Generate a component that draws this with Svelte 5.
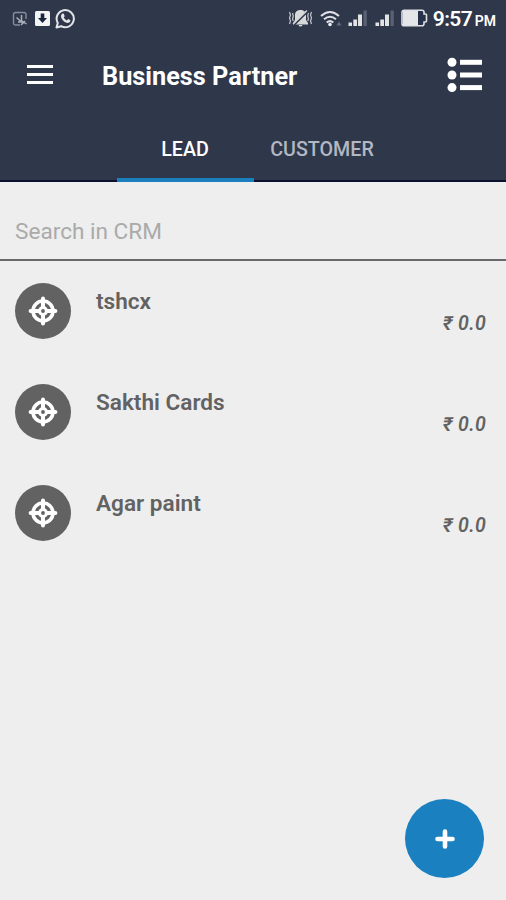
<script>
    let activeTab = "LEAD";
    const tabs = ["LEAD", "CUSTOMER"];

    let partners = [
        { name: "tshcx", amount: "0.0" },
        { name: "Sakthi Cards", amount: "0.0" },
        { name: "Agar paint", amount: "0.0" },
    ];
</script>

<div class="screen">
    <header>
        <div class="status">
            <div class="notifications">
                <svg class="shot" width="16" height="16" viewBox="0 0 16 16">
                    <path d="M8 14H3.500A2 2 0 0 1 1.500 12V3.500A2 2 0 0 1 3.500 1.500H12A2 2 0 0 1 14 3.500V8" fill="none" stroke="#858d9d" stroke-width="1.400" />
                    <path d="M4.500 6.500l5 4.500M9.500 4v7M6 11h5M13 10l-4 4M10 10l4.500 3" fill="none" stroke="#aab0bb" stroke-width="1.500" />
                </svg>
                <svg class="download" width="15" height="15" viewBox="0 0 15 15">
                    <rect width="15" height="15" rx="1.500" fill="#f3f4f6" />
                    <path d="M5.700 2.500h3.600v4.500h2.700l-4.500 5-4.500-5h2.700z" fill="#18233c" />
                </svg>
                <svg width="21" height="21" viewBox="0 0 21 21">
                    <path d="M1.500 19.500l1.300-4.600A8.600 8.600 0 1 1 6.200 18.200z" fill="none" stroke="#e3e5e9" stroke-width="2" stroke-linejoin="round" />
                    <path d="M7.300 5.500l1.500.3.900 2.400-1 1.300q1.200 2.100 3.100 2.900l1.300-1.300 2.400 1.200q-.2 2.600-2.800 2.700-4.100-.4-6.600-5.500-.7-2.600 1.200-4z" fill="#e3e5e9" />
                </svg>
            </div>
            <div class="system">
                <svg class="vibrate" width="25" height="18" viewBox="0 0 25 18">
                    <path d="M12.500 1c-4 0-5.500 2.500-5.500 5v5L5 14v1.500h15V14l-2-3V6c0-2.500-1.500-5-5.500-5zM10.500 16h4q-.5 1.500-2 1.500t-2-1.500z" fill="#d7d9d8" />
                    <path d="M5.300 16.500L20.500 1.500" stroke="#2f374b" stroke-width="2.200" />
                    <path d="M5 15.300L19 1.500" stroke="#d7d9d8" stroke-width="1.300" />
                    <path d="M1.500 3l1 3-1 3 1 3-1 3M4.500 4l.8 3-.8 3 .8 2M23.500 3l-1 3 1 3-1 3 1 3M20.500 4l-.8 3 .8 3-.8 2" fill="none" stroke="#c5c8ce" stroke-width="1.200" />
                </svg>
                <svg class="wifi" width="24" height="17" viewBox="0 0 24 17">
                    <path d="M1 6q9-8 18 0M4 9.300q6-5 12 0M6.700 12.500q3.300-2.800 6.600 0" fill="none" stroke="#dfe1e4" stroke-width="2" />
                    <circle cx="10" cy="14.500" r="1.800" fill="#eee" />
                    <path d="M16.500 15.500l2.500-4 2.500 4z" fill="#626a7b" />
                </svg>
                {#each [0, 1] as sim}
                    <svg class="signal" width="20" height="18" viewBox="0 0 20 18">
                        <path d="M.5 13.500H4V17H.5zM5.300 10.500H9V17H5.300zM10 5.500h4V17h-4z" fill="#e1e3e5" />
                        <path d="M15.500 1.500h3.300V17h-3.300z" fill="#596173" />
                    </svg>
                {/each}
                <svg class="battery" width="27" height="18" viewBox="0 0 27 18">
                    <path d="M3 1.200h18a2 2 0 0 1 2 2V5h1.500a1 1 0 0 1 1 1v6a1 1 0 0 1-1 1H23v1.800a2 2 0 0 1-2 2H3a2 2 0 0 1-2-2V3.200a2 2 0 0 1 2-2z" fill="#273149" stroke="#dfe1e4" stroke-width="1.600" />
                    <path d="M2 2h15v14H2z" fill="#e5e6e7" />
                </svg>
                <span class="time">9:57</span><span class="period">PM</span>
            </div>
        </div>

        <div class="toolbar">
            <button class="menu" aria-label="Menu">
                <span></span>
                <span></span>
                <span></span>
            </button>
            <h1>Business Partner</h1>
            <button class="list-button" aria-label="List">
                <svg width="36" height="36" viewBox="0 0 36 36">
                    <g fill="#fff">
                        <circle cx="5" cy="5.300" r="4.500" />
                        <circle cx="5" cy="18" r="4.500" />
                        <circle cx="5" cy="30.600" r="4.500" />
                        <rect x="13" y="2.800" width="22" height="5" />
                        <rect x="13" y="15.500" width="22" height="5" />
                        <rect x="13" y="28.100" width="22" height="5" />
                    </g>
                </svg>
            </button>
        </div>

        <nav>
            {#each tabs as tab}
                <button class="tab" class:active={activeTab === tab} on:click={() => (activeTab = tab)}>
                    <span>{tab}</span>
                </button>
            {/each}
        </nav>
    </header>

    <input type="text" placeholder="Search in CRM" />

    <ul>
        {#each partners as partner}
            <li>
                <div class="avatar">
                    <svg width="30" height="30" viewBox="0 0 30 30">
                        <circle cx="15" cy="15" r="10" fill="none" stroke="#fff" stroke-width="3.600" />
                        <circle cx="15" cy="15" r="3.500" fill="none" stroke="#fff" stroke-width="3.200" />
                        <path d="M15 2.600v8.400M15 19v8.400M2.600 15h8.400M19 15h8.400" stroke="#fff" stroke-width="4" stroke-linecap="round" />
                    </svg>
                </div>
                <strong>{partner.name}</strong>
                <em>₹ {partner.amount}</em>
            </li>
        {/each}
    </ul>

    <button class="add" aria-label="Add">
        <svg width="20" height="20" viewBox="0 0 20 20">
            <path d="M10 2.500v15M2.500 10h15" stroke="#fff" stroke-width="4.600" stroke-linecap="round" />
        </svg>
    </button>
</div>

<style>
    :global(body) {
        margin: 0;
        background: #eee;
    }

    .screen {
        position: relative;
        width: 506px;
        height: 900px;
        overflow: hidden;
        background: #eee;
        color: #626262;
        font-family: Roboto, sans-serif;
    }

    button {
        padding: 0;
        border: 0;
        background: none;
        color: inherit;
        font: inherit;
    }

    svg {
        display: block;
        flex: none;
    }

    header {
        box-sizing: border-box;
        height: 182px;
        background: #2f374b;
        border-bottom: 2px solid #0c1130;
        color: #fff;
    }

    .status {
        display: flex;
        justify-content: space-between;
        height: 37px;
        padding: 0 10px 0 12px;
    }

    .notifications,
    .system {
        display: flex;
        align-items: center;
        height: 36px;
    }

    .shot {
        margin-right: 7px;
        margin-top: 1px;
    }

    .download {
        margin-right: 5px;
    }

    .vibrate {
        margin-right: 7px;
    }

    .wifi {
        margin-right: 4px;
    }

    .signal {
        margin-right: 7px;
    }

    .battery {
        margin-right: 5px;
        margin-left: -1px;
    }

    .time {
        width: 42px;
        padding-top: 2px;
        font-size: 21px;
        font-weight: 600;
        letter-spacing: -0.6px;
        white-space: nowrap;
    }

    .period {
        padding-top: 5px;
        font-size: 14px;
        font-weight: 600;
    }

    .toolbar {
        display: flex;
        align-items: center;
        height: 76px;
        padding: 0 23px 0 27px;
    }

    .menu {
        display: flex;
        flex-direction: column;
        gap: 5px;
        width: 26px;
        margin-top: -1px;
    }

    .menu span {
        height: 3px;
        background: #fff;
    }

    h1 {
        flex: 1;
        margin: 2px 0 0 49px;
        font-size: 25.3px;
        font-weight: 700;
    }

    nav {
        display: flex;
        height: 69px;
        padding-left: 117px;
    }

    .tab {
        display: flex;
        align-items: center;
        justify-content: center;
        box-sizing: border-box;
        width: 137px;
        height: 69px;
        padding: 8px 1px 0 0;
        border-bottom: 4px solid transparent;
        color: #b2b7c2;
        font-size: 19.7px;
        font-weight: 500;
    }

    .tab.active {
        border-color: #1b7fbd;
        color: #fff;
    }

    input {
        display: block;
        box-sizing: border-box;
        width: 100%;
        height: 79px;
        padding: 22px 15px 0;
        border: 0;
        border-bottom: 2px solid #68686b;
        outline: 0;
        background: none;
        font: 22.6px Roboto, sans-serif;
    }

    input::placeholder {
        color: #aaa;
        opacity: 1;
    }

    ul {
        margin: 0;
        padding: 0;
        list-style: none;
    }

    li {
        display: flex;
        align-items: flex-start;
        box-sizing: border-box;
        height: 101.2px;
        padding: 22px 20px 0 15px;
    }

    .avatar {
        display: flex;
        align-items: center;
        justify-content: center;
        width: 56px;
        height: 56px;
        border-radius: 50%;
        background: #626262;
    }

    strong {
        flex: 1;
        margin: 5px 0 0 25px;
        font-size: 22.6px;
        font-weight: 600;
        line-height: 27px;
    }

    em {
        margin-top: 28.5px;
        font-size: 19.5px;
        font-weight: 600;
        line-height: 24px;
        letter-spacing: 0.3px;
    }

    .add {
        position: absolute;
        right: 22px;
        bottom: 22px;
        display: flex;
        align-items: center;
        justify-content: center;
        width: 79px;
        height: 79px;
        border-radius: 50%;
        background: #1b80bf;
    }
</style>
